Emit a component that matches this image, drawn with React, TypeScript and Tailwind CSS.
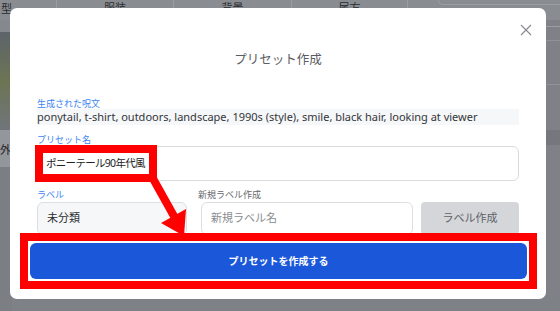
import React from "react";

const jp = { fontFamily: '"Noto Sans", "Noto Sans CJK JP", sans-serif' };

export default function App() {
  return (
    <div className="relative w-[560px] h-[311px] overflow-hidden bg-[#7e8186]" style={jp}>
      {/* background page (dimmed) */}
      <div className="absolute inset-0 flex flex-col">
        <div className="h-[20px] flex bg-[#898c91] text-[11px] text-[#2a2c30] leading-none">
          <div className="w-[57px] border-r border-[#9a9da2] pl-[1px] pt-[3px]">型</div>
          <div className="w-[117px] border-r border-[#9a9da2] flex justify-center pt-[2px]">服装</div>
          <div className="w-[118px] border-r border-[#9a9da2] flex justify-center pt-[2px]">背景</div>
          <div className="w-[116px] border-r border-[#9a9da2] flex justify-center pt-[2px]">尾方</div>
          <div className="flex-1 pl-[30px]">
            <div className="h-[5px] rounded-bl-[8px] border-l border-b border-[#9a9da2]" />
          </div>
        </div>
        <div className="flex flex-1">
          <div className="w-[12px] flex flex-col">
            <div className="h-[12px] bg-[#85888d]" />
            <div className="h-[98px] bg-gradient-to-b from-[#5d6369] via-[#6d7453] to-[#70757b]" />
            <div className="h-[37px] bg-[#93969b] text-[11px] text-[#1e2024] pt-[14px] leading-none">外</div>
            <div className="flex-1 bg-[#7b7e83]" />
          </div>
          <div className="flex-1" />
          <div className="w-[14px] flex flex-col">
            <div className="h-[7px] border-b border-[#9a9da2]" />
            <div className="h-[13px]" />
            <div className="h-[45px] border-t border-[#8f9297] border-b" />
            <div className="h-[45px]" />
            <div className="h-[15px] bg-[#74777c]" />
            <div className="flex-1" />
          </div>
        </div>
      </div>

      {/* dialog */}
      <div className="absolute left-[10px] top-[8px] w-[536px] h-[291px] bg-white rounded-[7px] px-[27px] pt-[44px] flex flex-col">
        <button className="absolute right-[14px] top-[16px] w-[12px] h-[12px] text-[#888b8f]">
          <svg viewBox="0 0 12 12" width="12" height="12" fill="none" stroke="currentColor" strokeWidth="1.2">
            <path d="M1 1L11 11M11 1L1 11" />
          </svg>
        </button>
        <div className="h-[16px] text-center text-[12.5px] leading-[16px] text-[#5a5d61]">プリセット作成</div>

        <div className="mt-[31px] h-[10px] text-[9px] leading-[10px] text-[#3d86f0]">生成された呪文</div>
        <div className="h-[16px] bg-[#f6f7f8] text-[11px] leading-[16px] text-[#33363a] whitespace-nowrap overflow-hidden">
          ponytail, t-shirt, outdoors, landscape, 1990s (style), smile, black hair, looking at viewer
        </div>

        <div className="mt-[10px] h-[10px] text-[9px] leading-[10px] text-[#3d86f0]">プリセット名</div>
        <div className="mt-[1px] h-[35px] border border-[#d9dcdf] rounded-[6px] flex items-center pl-[8px] text-[10.5px] tracking-[-0.7px] text-[#222]">
          ポニーテール90年代風
        </div>

        <div className="mt-[9px] h-[10px] flex text-[9px] leading-[10px]">
          <div className="w-[161px] text-[#3d86f0]">ラベル</div>
          <div className="text-[#65686c]">新規ラベル作成</div>
        </div>
        <div className="mt-[2px] h-[33px] flex">
          <div className="w-[150px] border border-[#dcdfe2] bg-[#f6f7f8] rounded-[6px] flex items-center pl-[9px] text-[11px] text-[#2a2c30]">
            未分類
          </div>
          <div className="w-[212px] ml-[14px] border border-[#dcdfe2] rounded-[6px] flex items-center pl-[9px] text-[11px] text-[#8a8d91]">
            新規ラベル名
          </div>
          <div className="w-[98px] ml-[8px] bg-[#d4d6da] rounded-[4px] flex items-center justify-center text-[11px] text-[#5f6266]">
            ラベル作成
          </div>
        </div>

        <div className="mt-[8px] -ml-[7px] -mr-[8px] h-[36px] bg-[#1b57d9] rounded-[6px] flex items-center justify-center text-[10px] font-bold text-white">
          プリセットを作成する
        </div>
      </div>

      {/* annotations */}
      <div className="absolute left-[35px] top-[145px] w-[122px] h-[37px] border-[8px] border-[#ff0000]" />
      <div className="absolute left-[20px] top-[233px] w-[517px] h-[56px] border-[8px] border-[#ff0000]" />
      <svg className="absolute left-0 top-0 pointer-events-none" width="560" height="311" viewBox="0 0 560 311">
        <line x1="151" y1="175" x2="175" y2="218" stroke="#ff0000" strokeWidth="8" />
        <polygon points="184,236 161,223 186,209" fill="#ff0000" />
      </svg>
    </div>
  );
}
